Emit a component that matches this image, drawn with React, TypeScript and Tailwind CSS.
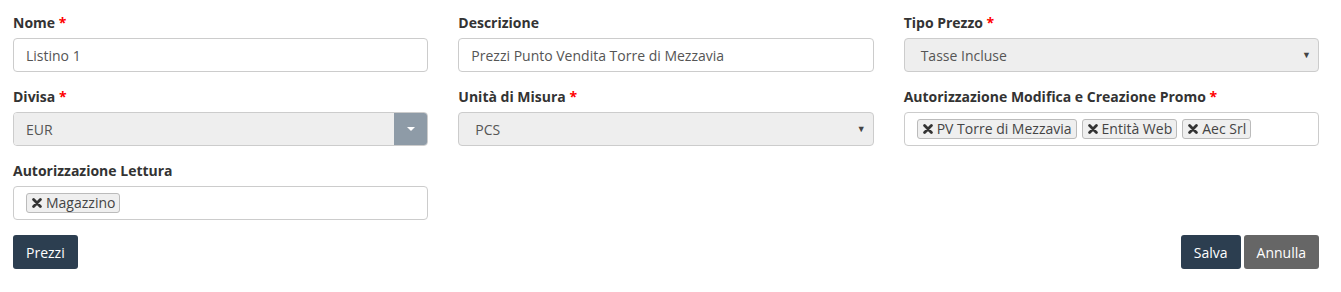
import React from 'react';

function Req() {
  return <span className="text-[#ff0000]"> *</span>;
}

function Label({ children, required }: { children: React.ReactNode; required?: boolean }) {
  return (
    <label className="block h-5 mb-[5px] text-[14px] leading-5 font-bold text-[#333]">
      {children}
      {required && <Req />}
    </label>
  );
}

function XIcon() {
  return (
    <svg width="10" height="10" viewBox="0 0 10 10" className="shrink-0">
      <path d="M1.6 1.6 L8.4 8.4 M8.4 1.6 L1.6 8.4" stroke="#333" strokeWidth="2.8" strokeLinecap="round" />
    </svg>
  );
}

function Tag({ text }: { text: string }) {
  return (
    <span className="flex items-center gap-[4px] h-5 pl-[5px] pr-[4px] rounded-[3px] border border-[#bbb] bg-[#efefef] text-[14px] leading-[18px] text-[#444]">
      <XIcon />
      {text}
    </span>
  );
}

function TextInput({ value }: { value: string }) {
  return (
    <div className="h-[34px] flex items-center px-3 rounded-[4px] border border-[#ccc] bg-white text-[14px] text-[#555]">
      {value}
    </div>
  );
}

function SelectBox({ value }: { value: string }) {
  return (
    <div className="h-[34px] flex items-center justify-between pl-4 pr-[7px] rounded-[4px] border border-[#ccc] bg-[#eee] text-[14px] text-[#555]">
      <span>{value}</span>
      <span className="text-[9px] text-[#444]">▼</span>
    </div>
  );
}

function TagBox({ tags }: { tags: string[] }) {
  return (
    <div className="h-[34px] flex items-center gap-[5px] px-3 rounded-[4px] border border-[#ccc] bg-white">
      {tags.map(t => <Tag key={t} text={t} />)}
    </div>
  );
}

export default function App() {
  return (
    <div className="w-[1341px] h-[292px] bg-white pl-[13px] pr-[22px] pt-[13px] font-['Open_Sans',sans-serif]">
      <div className="grid grid-cols-3 gap-x-[30px]">
        <div className="mb-[15px]">
          <Label required>Nome</Label>
          <TextInput value="Listino 1" />
        </div>
        <div className="mb-[15px]">
          <Label>Descrizione</Label>
          <TextInput value="Prezzi Punto Vendita Torre di Mezzavia" />
        </div>
        <div className="mb-[15px]">
          <Label required>Tipo Prezzo</Label>
          <SelectBox value="Tasse Incluse" />
        </div>

        <div className="mb-[15px]">
          <Label required>Divisa</Label>
          <div className="h-[34px] flex rounded-[4px] border border-[#ccc] overflow-hidden">
            <div className="flex-1 flex items-center px-3 bg-[#eee] text-[14px] text-[#555]">EUR</div>
            <div className="w-[33px] flex items-center justify-center bg-[#8e9ba7]">
              <svg width="8" height="4" viewBox="0 0 8 4">
                <path d="M0 0 L8 0 L4 4 Z" fill="#fff" />
              </svg>
            </div>
          </div>
        </div>
        <div className="mb-[15px]">
          <Label required>Unità di Misura</Label>
          <SelectBox value="PCS" />
        </div>
        <div className="mb-[15px]">
          <Label required>Autorizzazione Modifica e Creazione Promo</Label>
          <TagBox tags={['PV Torre di Mezzavia', 'Entità Web', 'Aec Srl']} />
        </div>

        <div className="mb-[15px]">
          <Label>Autorizzazione Lettura</Label>
          <TagBox tags={['Magazzino']} />
        </div>
      </div>

      <div className="flex justify-between">
        <button className="h-[34px] px-[13px] rounded-[3px] bg-[#2c3e50] text-white text-[14px]">Prezzi</button>
        <div className="flex gap-[3px]">
          <button className="h-[34px] px-[13px] rounded-[3px] bg-[#2c3e50] text-white text-[14px]">Salva</button>
          <button className="h-[34px] px-[13px] rounded-[3px] bg-[#666] text-white text-[14px]">Annulla</button>
        </div>
      </div>
    </div>
  );
}
